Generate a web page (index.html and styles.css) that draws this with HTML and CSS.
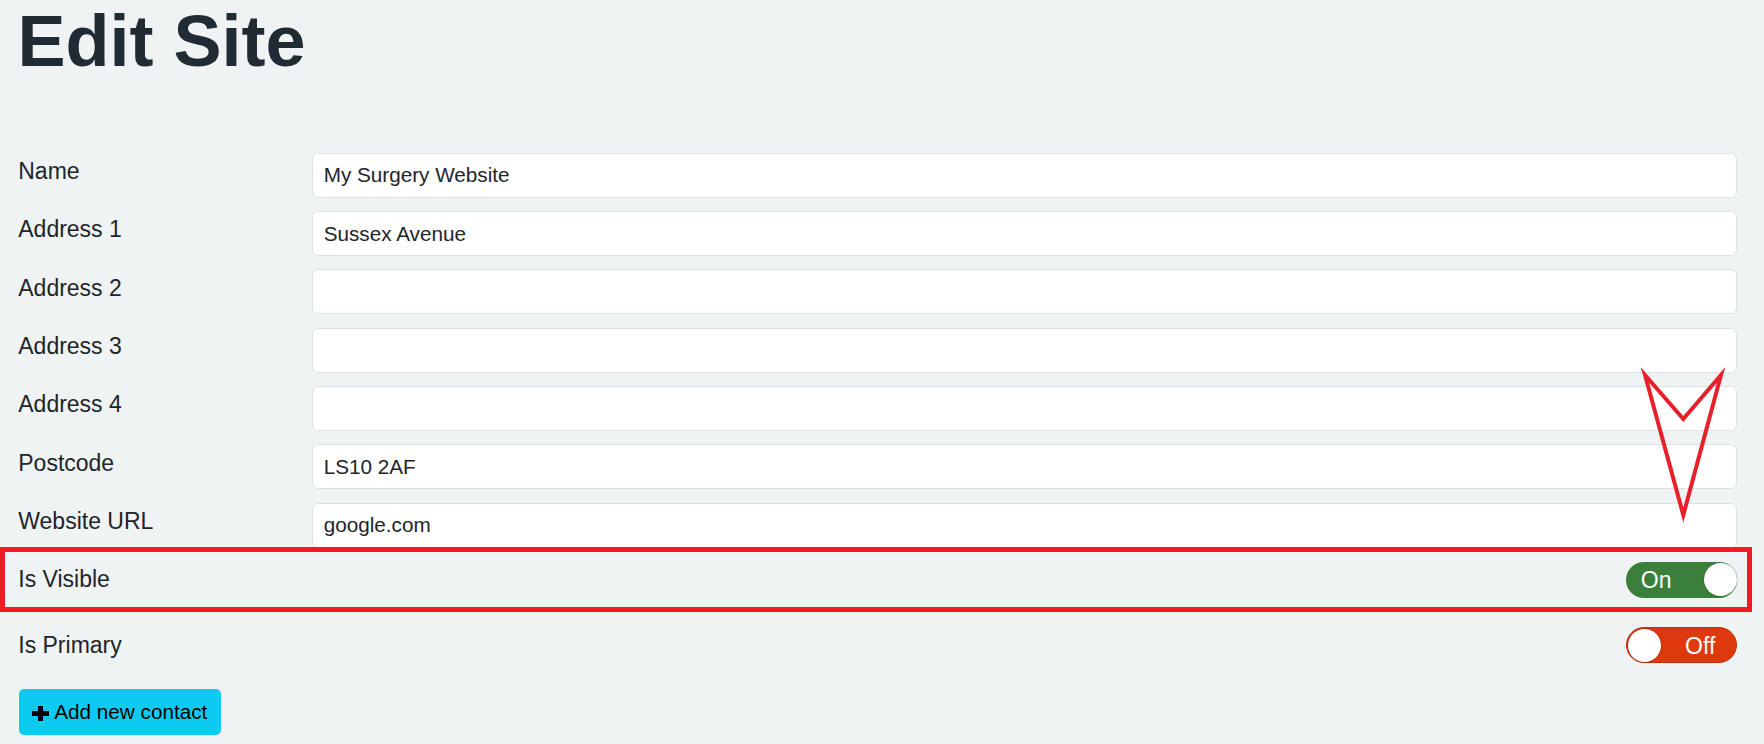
FILE: index.html
```html
<!DOCTYPE html>
<html lang="en">
<head>
<meta charset="utf-8">
<title>Edit Site</title>
<link rel="stylesheet" href="styles.css">
</head>
<body>
<div class="page">
  <h1 class="title">Edit Site</h1>
  <form class="form">
    <div class="row"><label class="label">Name</label><input class="input" type="text" value="My Surgery Website"></div>
    <div class="row"><label class="label">Address 1</label><input class="input" type="text" value="Sussex Avenue"></div>
    <div class="row"><label class="label">Address 2</label><input class="input" type="text" value=""></div>
    <div class="row"><label class="label">Address 3</label><input class="input" type="text" value=""></div>
    <div class="row"><label class="label">Address 4</label><input class="input" type="text" value=""></div>
    <div class="row"><label class="label">Postcode</label><input class="input" type="text" value="LS10 2AF"></div>
    <div class="row"><label class="label">Website URL</label><input class="input" type="text" value="google.com"></div>
    <div class="row switch-row">
      <span class="label">Is Visible</span>
      <div class="toggle on"><span class="toggle-text">On</span><span class="knob"></span></div>
    </div>
    <div class="row switch-row last">
      <span class="label">Is Primary</span>
      <div class="toggle off"><span class="knob"></span><span class="toggle-text">Off</span></div>
    </div>
    <button class="btn" type="button">
      <svg class="plus" viewBox="0 0 17 15" width="17" height="15" aria-hidden="true"><path d="M6 0h5v5h6v5h-6v5H6v-5H0V5h6z" fill="#000"/></svg>
      <span>Add new contact</span>
    </button>
  </form>
  <div class="highlight"></div>
  <svg class="arrow" viewBox="0 0 1764 744" width="1764" height="744" aria-hidden="true">
    <polygon points="1645,375 1683.3,419 1721,375 1683.3,515" fill="none" stroke="#e8202a" stroke-width="4" stroke-linejoin="miter" stroke-miterlimit="10"/>
  </svg>
</div>
</body>
</html>
```
FILE: styles.css
```css
html, body {
  margin: 0;
  padding: 0;
  background: #f0f3f4;
  overflow: hidden;
}

.page {
  position: relative;
  width: 1764px;
  height: 744px;
  box-sizing: border-box;
  padding: 5px 26.7px 0 18.25px;
  font-family: "Liberation Sans", Arial, sans-serif;
  color: #212529;
}

.title {
  margin: 0 0 0 -0.85px;
  font-size: 72px;
  line-height: 72px;
  font-weight: 700;
  color: #212b33;
}

.form {
  margin-top: 75.7px;
  display: flex;
  flex-direction: column;
}

.row {
  display: grid;
  grid-template-columns: 293.45px 1fr;
  align-items: start;
  margin-bottom: 13.33px;
}

.label {
  font-size: 23px;
  line-height: 1.5;
  padding-top: 1.4px;
  color: #212529;
}

.input {
  box-sizing: border-box;
  width: 100%;
  height: 45px;
  margin: 0;
  padding: 0 11px;
  border: 1px solid #dee2e6;
  border-radius: 6px;
  background: #fff;
  font-family: "Liberation Sans", Arial, sans-serif;
  font-size: 20.7px;
  color: #212529;
  outline: none;
}

.switch-row {
  min-height: 52.3px;
  margin-bottom: 13.4px;
}

.switch-row.last {
  margin-bottom: 10.3px;
}

.toggle {
  justify-self: end;
  box-sizing: border-box;
  width: 111px;
  height: 36px;
  margin-top: 0.7px;
  border-radius: 18px;
  display: flex;
  align-items: center;
  justify-content: space-between;
  color: #fff;
}

.toggle.on {
  background: #3b803a;
  padding: 0 0.5px 0 14.5px;
}

.toggle.off {
  background: #de390d;
  padding: 0 21px 0 1px;
  border: 1px solid #c2300a;
}

.toggle-text {
  font-size: 23px;
  line-height: 36px;
  padding-top: 1px;
}

.knob {
  width: 33px;
  height: 33px;
  border-radius: 50%;
  background: #fff;
  box-shadow: 0 0 0 1px rgba(0, 0, 0, 0.12);
}

.btn {
  align-self: flex-start;
  box-sizing: border-box;
  width: 201.7px;
  height: 45.5px;
  margin: 0 0 0 0.75px;
  padding: 0 0 0 12.7px;
  border: none;
  border-radius: 5px;
  background: #0dcaf0;
  color: #000;
  font-family: "Liberation Sans", Arial, sans-serif;
  font-size: 20.7px;
  display: flex;
  align-items: center;
  gap: 5.6px;
}

.plus {
  margin-top: 3px;
  flex: none;
}

.highlight {
  position: absolute;
  left: 0;
  top: 547px;
  width: 1752px;
  height: 65px;
  box-sizing: border-box;
  border: 5px solid #ed1c24;
  pointer-events: none;
}

.arrow {
  position: absolute;
  left: 0;
  top: 0;
  pointer-events: none;
}
```
